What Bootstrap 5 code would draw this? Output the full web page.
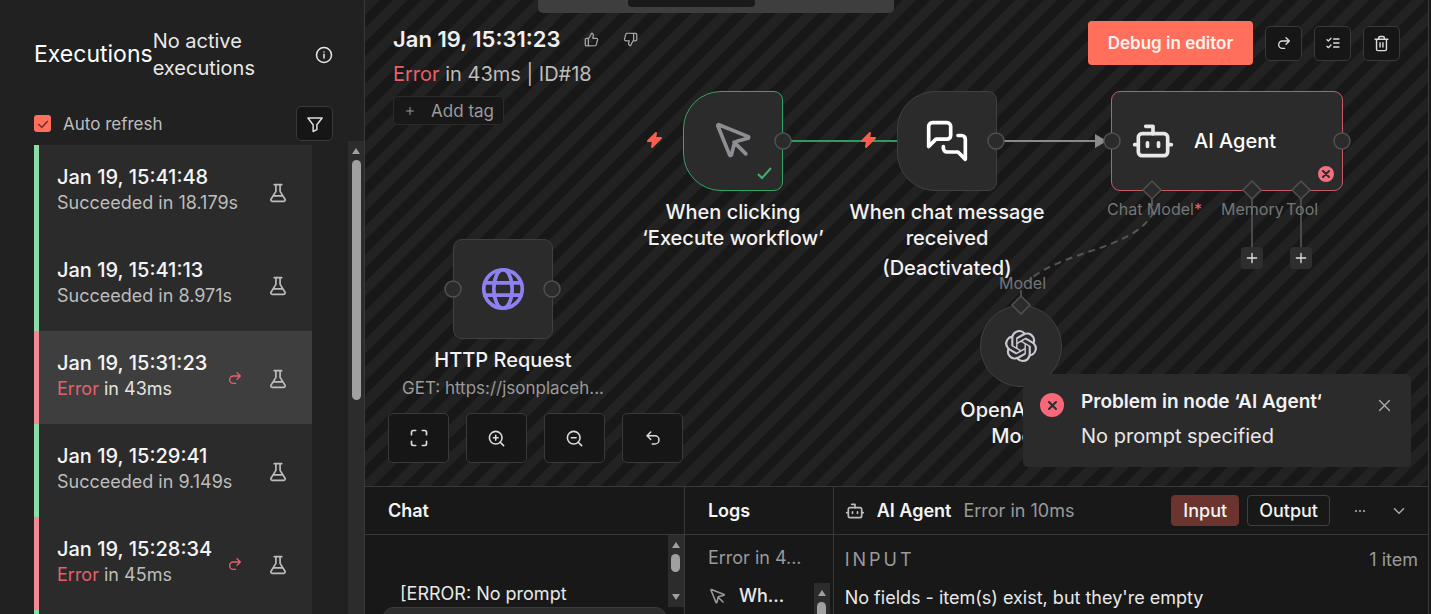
<!DOCTYPE html>
<html lang="en" data-bs-theme="dark">
<head>
<meta charset="utf-8">
<meta name="viewport" content="width=device-width, initial-scale=1">
<title>Executions</title>
<link href="https://cdn.jsdelivr.net/npm/bootstrap@5.3.0/dist/css/bootstrap.min.css" rel="stylesheet">
<style>
  :root { --panel:#212121; --node:#2b2b2b; --ink:#181818; --line:#393939; --accent:#ff6f5c; --ok:#8ddba8; --err:#f28a93; }
  body { font-family: Inter, "Liberation Sans", sans-serif; font-size: 18px; line-height: 26px; background: var(--ink); color: #e8e8e8; }
  svg { display: block; flex: none; }
  .ico { fill: none; stroke: currentColor; stroke-width: 2; stroke-linecap: round; stroke-linejoin: round; }
  .dim { color: #bdbdbd; }
  .faint { color: #9a9a9a; }
  .err-text { color: #e5606d; }
  .t17 { font-size: 17px; } .t18 { font-size: 18px; } .t20 { font-size: 20px; } .t23 { font-size: 23px; }

  .side { width: 365px; background: var(--panel); border-right: 1px solid var(--line); }
  .side-head { padding: 28px 31px 0 34px; }
  .side-tools { padding: 24px 31px 0 34px; }
  .side-list { padding-left: 34px; }
  .active-note { line-height: 27px; width: 120px; }
  .form-check-input.auto { width: 17px; height: 17px; margin: 0; border: 0; border-radius: 3px; background-color: var(--accent); background-size: 14px; background-image: url("data:image/svg+xml,%3Csvg xmlns='http://www.w3.org/2000/svg' viewBox='0 0 24 24'%3E%3Cpath d='M4 12l6 6L20 7' fill='none' stroke='%23702c24' stroke-width='2.5'/%3E%3C/svg%3E"); }
  .sq { width: 37px; height: 35px; padding: 0; border: 1px solid var(--line); border-radius: 5px; background: #161616; color: #dcdcdc; display: flex; align-items: center; justify-content: center; }
  .run { height: 93px; width: 278px; padding: 19px 24px 0 18px; background: var(--node); border-left: 5px solid var(--ok); color: #bdbdbd; text-decoration: none; white-space: nowrap; }
  .run.failed { border-left-color: var(--err); }
  .run.current { background: #3e3e3e; color: #e4e4e4; }
  .run strong { color: #f4f4f4; font-weight: 500; }
  .run-icons { padding-top: 18px; gap: 25px; }
  .bar { width: 16px; background: #2c2c2c; padding: 7px 0; }
  .tri { border: 4px solid transparent; border-top: 0; border-bottom: 6px solid #a0a0a0; width: 8px; height: 6px; flex: none; }
  .tri.down { transform: rotate(180deg); }
  .thumb { width: 9px; border-radius: 5px; background: #a0a0a0; margin-top: 6px; flex: none; }

  .stage { border-right: 1px solid var(--line); margin-right: 2px; }
  .board { background: repeating-linear-gradient(135deg, #222 0 10px, #181818 10px 20px); }
  .mode-tabs { background: #3e3e3e; height: 13px; width: 356px; border-radius: 0 0 5px 5px; z-index: 6; padding-left: 90px; }
  .mode-tabs span { background: #1a1a1a; height: 7px; width: 127px; border-radius: 0 0 4px 4px; }
  .board-head { padding: 21px 28px 0 28px; z-index: 4; }
  .run-title { font-size: 22px; font-weight: 600; line-height: 36px; color: #f0f0f0; margin: 0; }
  .run-meta { line-height: 28px; padding-top: 3px; }
  .rate { background: none; border: 0; padding: 0; color: #a8a8a8; }
  .tag-btn { border: 1px solid #2b2b2b; background: #181818; border-radius: 5px; height: 29px; width: 111px; padding: 0 9px 0 10px; font-size: 17px; color: #9a9a9a; margin-top: 8px; }
  .debug { background: var(--accent); color: #fff3ee; border: 0; border-radius: 4px; width: 165px; height: 44px; font-weight: 600; font-size: 17px; padding: 0; }
  .board-foot { padding: 0 0 23px 23px; z-index: 4; gap: 17px; }
  .zoom-btn { width: 61px; height: 50px; }

  .node { position: absolute; background: var(--node); border: 1px solid #404040; border-radius: 9px; width: 100px; height: 100px; display: flex; align-items: center; justify-content: center; }
  .node.trigger { border-radius: 38px 9px 9px 38px; }
  .node.done { border-color: #35a468; }
  .node.broken { border-color: #c45a66; width: 232px; padding-left: 19px; justify-content: flex-start; gap: 19px; }
  .node-name { position: absolute; top: 107px; left: 50%; transform: translateX(-50%); width: 204px; text-align: center; font-size: 20px; font-weight: 500; line-height: 26px; color: #f2f2f2; }
  .node-sub { line-height: 30px; white-space: nowrap; }
  .port { position: absolute; font-size: 16px; line-height: 20px; color: #757575; white-space: nowrap; }
  .add { position: absolute; width: 22px; height: 22px; padding: 0; border: 0; border-radius: 4px; background: #2e2e2e; color: #e0e0e0; display: flex; align-items: center; justify-content: center; }
  .toast-box { right: 17px; bottom: 19px; width: 388px; height: 93px; background: #2b2b2b; border-radius: 5px; padding: 15px 18px 0 17px; z-index: 7; }
  .toast-title { font-size: 19px; font-weight: 600; color: #f2f2f2; }

  .dock { height: 128px; border-top: 1px solid var(--line); }
  .dock > section + section { border-left: 1px solid var(--line); }
  .dock-chat { width: 30%; } .dock-logs { width: 14%; }
  .dock-head { height: 48px; border-bottom: 1px solid var(--line); flex: none; padding: 0 23px; }
  .dock h2 { font-size: 18px; font-weight: 600; margin: 0; line-height: 26px; color: #f4f4f4; }
  .dock-detail .dock-head { padding: 0 20px 0 11px; }
  .chat-line { padding: 46px 0 0 35px; }
  .chat-box { height: 60px; margin: 0 18px; width: auto; border: 1px solid #3a3a3a; border-radius: 10px; background: #2d2d2d; resize: none; flex: none; }
  .log-status { padding: 10px 23px 0; }
  .log-row { padding: 12px 3px 0 23px; }
  .pill { height: 31px; border-radius: 4px; border: 1px solid #404040; background: #181818; color: #f2f2f2; font-size: 18px; font-weight: 500; padding: 0 11px; line-height: 26px; }
  .pill.on { background: #6b342e; border-color: #6b342e; }
  .caps { letter-spacing: 3px; }
  .detail-body { padding: 12px 10px 0 11px; }
</style>
</head>
<body class="vh-100 overflow-hidden">
<svg width="0" height="0" class="position-absolute" aria-hidden="true">
  <symbol id="i-info" viewBox="0 0 24 24"><circle cx="12" cy="12" r="10"/><path d="M12 16v-5M12 8h.01"/></symbol>
  <symbol id="i-filter" viewBox="0 0 24 24"><path d="M2.500 4h19l-7 9v6.500l-5 2.500v-9z"/></symbol>
  <symbol id="i-flask" viewBox="0 0 24 24"><path d="M7.500 2h9M9.500 2v8L3.600 19.500A1.700 1.700 0 0 0 5 22h14a1.700 1.700 0 0 0 1.400-2.500L14.500 10V2M6.500 15.500h11"/></symbol>
  <symbol id="i-redo" viewBox="0 0 24 24"><path d="m15 14 5-5-5-5M20 9H9.500a5.500 5.500 0 0 0 0 11H13"/></symbol>
  <symbol id="i-undo" viewBox="0 0 24 24"><path d="M9 14 4 9l5-5M4 9h10.500a5.500 5.500 0 0 1 0 11H11"/></symbol>
  <symbol id="i-up" viewBox="0 0 24 24"><path d="M7 10v12M15 5.900 14 10h5.800a2 2 0 0 1 1.900 2.600l-2.300 8a2 2 0 0 1-1.900 1.400H4a2 2 0 0 1-2-2v-8a2 2 0 0 1 2-2h2.800a2 2 0 0 0 1.800-1.100L12 2a3.100 3.100 0 0 1 3 3.900Z"/></symbol>
  <symbol id="i-down" viewBox="0 0 24 24"><path d="M17 14V2M9 18.100 10 14H4.200a2 2 0 0 1-1.900-2.600l2.300-8A2 2 0 0 1 6.500 2H20a2 2 0 0 1 2 2v8a2 2 0 0 1-2 2h-2.800a2 2 0 0 0-1.800 1.100L12 22a3.100 3.100 0 0 1-3-3.900Z"/></symbol>
  <symbol id="i-plus" viewBox="0 0 24 24"><path d="M5 12h14M12 5v14"/></symbol>
  <symbol id="i-checks" viewBox="0 0 24 24"><path d="m3 17 2 2 4-4M3 7l2 2 4-4M13 6h8M13 12h8M13 18h8"/></symbol>
  <symbol id="i-trash" viewBox="0 0 24 24"><path d="M3 6h18M19 6v14a2 2 0 0 1-2 2H7a2 2 0 0 1-2-2V6M8 6V4a2 2 0 0 1 2-2h4a2 2 0 0 1 2 2v2M10 11v6M14 11v6"/></symbol>
  <symbol id="i-fit" viewBox="0 0 24 24"><path d="M8 3H5a2 2 0 0 0-2 2v3M21 8V5a2 2 0 0 0-2-2h-3M3 16v3a2 2 0 0 0 2 2h3M16 21h3a2 2 0 0 0 2-2v-3"/></symbol>
  <symbol id="i-zin" viewBox="0 0 24 24"><circle cx="11" cy="11" r="8"/><path d="m21 21-4.300-4.300M11 8v6M8 11h6"/></symbol>
  <symbol id="i-zout" viewBox="0 0 24 24"><circle cx="11" cy="11" r="8"/><path d="m21 21-4.300-4.300M8 11h6"/></symbol>
  <symbol id="i-cursor" viewBox="0 0 24 24"><path d="M12.600 12.600 19 19M3.700 3.700a.5.5 0 0 1 .6-.6l16 6.500a.5.5 0 0 1-.1.900l-6.100 1.600a2 2 0 0 0-1.400 1.400l-1.600 6.100a.5.5 0 0 1-.9.100z"/></symbol>
  <symbol id="i-chats" viewBox="0 0 24 24"><path d="M14 9a2 2 0 0 1-2 2H6l-4 4V4a2 2 0 0 1 2-2h8a2 2 0 0 1 2 2zM18 9h2a2 2 0 0 1 2 2v11l-4-4h-6a2 2 0 0 1-2-2v-1"/></symbol>
  <symbol id="i-bot" viewBox="0 0 24 24"><path d="M12 8V4H8"/><rect x="4" y="8" width="16" height="12" rx="2"/><path d="M2 14h2M20 14h2M15 13v2M9 13v2"/></symbol>
  <symbol id="i-globe" viewBox="0 0 24 24"><circle cx="12" cy="12" r="10.500"/><ellipse cx="12" cy="12" rx="5" ry="10.500"/><path d="M2 8.700h20M2 15.300h20"/></symbol>
  <symbol id="i-x" viewBox="0 0 24 24"><path d="M5 5l14 14M19 5 5 19"/></symbol>
  <symbol id="i-chev" viewBox="0 0 24 24"><path d="m6 9 6 6 6-6"/></symbol>
  <symbol id="i-dots" viewBox="0 0 24 24"><g fill="currentColor" stroke="none"><circle cx="4" cy="12" r="2.200"/><circle cx="12" cy="12" r="2.200"/><circle cx="20" cy="12" r="2.200"/></g></symbol>
  <symbol id="i-openai" viewBox="0 0 24 24"><path d="M22.2819 9.8211a5.9847 5.9847 0 0 0-.5157-4.9108 6.0462 6.0462 0 0 0-6.5098-2.9A6.0651 6.0651 0 0 0 4.9807 4.1818a5.9847 5.9847 0 0 0-3.9977 2.9 6.0462 6.0462 0 0 0 .7427 7.0966 5.98 5.98 0 0 0 .511 4.9107 6.051 6.051 0 0 0 6.5146 2.9001A5.9847 5.9847 0 0 0 13.2599 24a6.0557 6.0557 0 0 0 5.7718-4.2058 5.9894 5.9894 0 0 0 3.9977-2.9001 6.0557 6.0557 0 0 0-.7475-7.0729zm-9.022 12.6081a4.4755 4.4755 0 0 1-2.8764-1.0408l.1419-.0804 4.7783-2.7582a.7948.7948 0 0 0 .3927-.6813v-6.7369l2.02 1.1686a.071.071 0 0 1 .038.052v5.5826a4.504 4.504 0 0 1-4.4945 4.4944zm-9.6607-4.1254a4.4708 4.4708 0 0 1-.5346-3.0137l.142.0852 4.783 2.7582a.7712.7712 0 0 0 .7806 0l5.8428-3.3685v2.3324a.0804.0804 0 0 1-.0332.0615L9.74 19.9502a4.4992 4.4992 0 0 1-6.1408-1.6464zM2.3408 7.8956a4.485 4.485 0 0 1 2.3655-1.9728V11.6a.7664.7664 0 0 0 .3879.6765l5.8144 3.3543-2.0201 1.1685a.0757.0757 0 0 1-.071 0l-4.8303-2.7865A4.504 4.504 0 0 1 2.3408 7.872zm16.5963 3.8558L13.1038 8.364 15.1192 7.2a.0757.0757 0 0 1 .071 0l4.8303 2.7913a4.4944 4.4944 0 0 1-.6765 8.1042v-5.6772a.79.79 0 0 0-.407-.667zm2.0107-3.0231l-.142-.0852-4.7735-2.7818a.7759.7759 0 0 0-.7854 0L9.409 9.2297V6.8974a.0662.0662 0 0 1 .0284-.0615l4.8303-2.7866a4.4992 4.4992 0 0 1 6.6802 4.66zM8.3065 12.863l-2.02-1.1638a.0804.0804 0 0 1-.038-.0567V6.0742a4.4992 4.4992 0 0 1 7.3757-3.4537l-.142.0805L8.704 5.459a.7948.7948 0 0 0-.3927.6813zm1.0976-2.3654l2.602-1.4998 2.6069 1.4998v2.9994l-2.5974 1.4997-2.6067-1.4997Z"/></symbol>
</svg>

<div class="d-flex h-100 position-relative">
  <div class="mode-tabs position-absolute top-0 start-50 translate-middle-x d-flex"><span></span></div>

  <aside class="side d-flex flex-column flex-shrink-0">
    <div class="side-head d-flex align-items-center">
      <h1 class="t23 fw-normal m-0">Executions</h1>
      <div class="active-note t20">No active executions</div>
      <svg class="ico ms-auto" width="18" height="18"><use href="#i-info"/></svg>
    </div>
    <div class="side-tools d-flex align-items-center justify-content-between">
      <div class="form-check d-flex align-items-center p-0 m-0">
        <input class="form-check-input auto float-none" type="checkbox" id="auto" checked>
        <label class="t17 dim ms-2 ps-1" for="auto">Auto refresh</label>
      </div>
      <button class="sq" type="button" aria-label="Filter"><svg class="ico" width="18" height="18"><use href="#i-filter"/></svg></button>
    </div>
    <div class="side-list d-flex flex-grow-1 justify-content-between overflow-hidden">
      <nav class="d-flex flex-column pt-1" aria-label="Executions">
        <a class="run d-flex justify-content-between flex-shrink-0" href="#"><span><strong class="t20 d-block">Jan 19, 15:41:48</strong><span class="d-block t18">Succeeded in 18.179s</span></span><span class="run-icons d-flex"><svg class="ico" width="20" height="22"><use href="#i-flask"/></svg></span></a>
        <a class="run d-flex justify-content-between flex-shrink-0" href="#"><span><strong class="t20 d-block">Jan 19, 15:41:13</strong><span class="d-block t18">Succeeded in 8.971s</span></span><span class="run-icons d-flex"><svg class="ico" width="20" height="22"><use href="#i-flask"/></svg></span></a>
        <a class="run failed current d-flex justify-content-between flex-shrink-0" href="#"><span><strong class="t20 d-block">Jan 19, 15:31:23</strong><span class="d-block t18"><span class="err-text">Error</span> in 43ms</span></span><span class="run-icons d-flex"><svg class="ico err-text" width="16" height="20"><use href="#i-redo"/></svg><svg class="ico dim" width="20" height="22"><use href="#i-flask"/></svg></span></a>
        <a class="run d-flex justify-content-between flex-shrink-0" href="#"><span><strong class="t20 d-block">Jan 19, 15:29:41</strong><span class="d-block t18">Succeeded in 9.149s</span></span><span class="run-icons d-flex"><svg class="ico" width="20" height="22"><use href="#i-flask"/></svg></span></a>
        <a class="run failed d-flex justify-content-between flex-shrink-0" href="#"><span><strong class="t20 d-block">Jan 19, 15:28:34</strong><span class="d-block t18"><span class="err-text">Error</span> in 45ms</span></span><span class="run-icons d-flex"><svg class="ico err-text" width="16" height="20"><use href="#i-redo"/></svg><svg class="ico" width="20" height="22"><use href="#i-flask"/></svg></span></a>
        <a class="run flex-shrink-0" href="#" aria-label="Older execution"></a>
      </nav>
      <div class="bar d-flex flex-column align-items-center" aria-hidden="true"><i class="tri"></i><i class="thumb" style="height:240px"></i></div>
    </div>
  </aside>

  <main class="stage d-flex flex-column flex-grow-1 overflow-hidden">
    <div class="board position-relative flex-grow-1 overflow-hidden">
      <!-- connections, drawn in board coordinates -->
      <svg class="position-absolute top-0 start-0" width="1063" height="486" fill="none" aria-hidden="true">
        <path d="M418 141H532" stroke="#2f9a5e" stroke-width="2"/>
        <path d="M632 141H734" stroke="#8a8a8a" stroke-width="2"/>
        <path d="M730 134l12 7-12 7z" fill="#8a8a8a"/>
        <path d="M787 199V215C765 250 700 250 664 280" stroke="#555" stroke-width="2" stroke-dasharray="7 5"/>
        <path d="M887 199v50M936 199v50M656 290v8" stroke="#4a4a4a" stroke-width="2"/>
      </svg>

      <div class="node trigger done" style="left:318px;top:91px">
        <svg class="ico" width="44" height="44" style="color:#8f8d93"><use href="#i-cursor"/></svg>
        <div class="node-name">When clicking ‘Execute workflow’</div>
      </div>
      <div class="node trigger" style="left:532px;top:91px">
        <svg class="ico text-white" width="44" height="44"><use href="#i-chats"/></svg>
        <div class="node-name">When chat message received<div class="mt-1">(Deactivated)</div></div>
      </div>
      <div class="node broken" style="left:746px;top:91px">
        <svg class="ico" width="44" height="44"><use href="#i-bot"/></svg>
        <span class="t20 text-white" style="font-weight:500">AI Agent</span>
      </div>
      <div class="node" style="left:88px;top:239px">
        <svg class="ico" width="44" height="44" style="color:#8d80f0"><use href="#i-globe"/></svg>
        <div class="node-name">HTTP Request<div class="node-sub t17 faint fw-normal">GET: https://jsonplaceh...</div></div>
      </div>
      <div class="node rounded-circle" style="left:615px;top:305px;width:82px;height:82px">
        <svg width="32" height="32" fill="#c9c9d4"><use href="#i-openai"/></svg>
        <div class="node-name" style="top:91px">OpenAI Chat<br>Model</div>
      </div>

      <!-- connection handles, trigger bolts and status marks -->
      <svg class="position-absolute top-0 start-0" width="1063" height="486" fill="none" aria-hidden="true">
        <g fill="#2b2b2b" stroke="#505050" stroke-width="1.500">
          <circle cx="418" cy="141" r="8"/><circle cx="631" cy="141" r="8"/><circle cx="747" cy="141" r="8"/><circle cx="977" cy="141" r="8"/>
          <circle cx="88" cy="289" r="8"/><circle cx="187" cy="289" r="8"/>
          <path d="M787 181l9 9-9 9-9-9zM887 181l9 9-9 9-9-9zM936 181l9 9-9 9-9-9zM656 296l9 9-9 9-9-9z"/>
        </g>
        <g fill="#ff5d4c" stroke="#ff5d4c" stroke-linejoin="round" stroke-width="2"><path id="bolt" d="M291 133l-8 8h5l-1 6 9-9h-6z"/><use href="#bolt" x="214"/></g>
        <path d="M393 174l4 4 9-10" stroke="#3fae70" stroke-width="2"/>
        <circle cx="961" cy="174" r="8" fill="#f0707f"/><path d="M958 171l6 6M964 171l-6 6" stroke="#2b2b2b" stroke-width="2" stroke-linecap="round"/>
      </svg>
      <span class="port" style="left:742px;top:199px">Chat Model<span class="err-text">*</span></span>
      <span class="port" style="left:856px;top:199px">Memory</span>
      <span class="port" style="left:921px;top:199px">Tool</span>
      <span class="port" style="left:634px;top:273px">Model</span>
      <button class="add" type="button" aria-label="Add memory" style="left:876px;top:247px"><svg class="ico" width="16" height="16"><use href="#i-plus"/></svg></button>
      <button class="add" type="button" aria-label="Add tool" style="left:925px;top:247px"><svg class="ico" width="16" height="16"><use href="#i-plus"/></svg></button>

      <header class="board-head position-absolute top-0 start-0 w-100 d-flex justify-content-between align-items-start">
        <div>
          <div class="d-flex align-items-center">
            <h2 class="run-title">Jan 19, 15:31:23</h2>
            <button class="rate ms-4" type="button" aria-label="Good run"><svg class="ico" width="15" height="15"><use href="#i-up"/></svg></button>
            <button class="rate ms-4" type="button" aria-label="Bad run"><svg class="ico" width="15" height="15"><use href="#i-down"/></svg></button>
          </div>
          <div class="run-meta t20 dim"><span class="err-text">Error</span> in 43ms | ID#18</div>
          <button class="tag-btn d-flex align-items-center justify-content-between" type="button"><svg class="ico" width="12" height="12"><use href="#i-plus"/></svg>Add tag</button>
        </div>
        <div class="d-flex align-items-center gap-2">
          <button class="debug me-1" type="button">Debug in editor</button>
          <button class="sq me-1" type="button" aria-label="Retry"><svg class="ico" width="16" height="16"><use href="#i-redo"/></svg></button>
          <button class="sq me-1" type="button" aria-label="Annotate"><svg class="ico" width="16" height="16"><use href="#i-checks"/></svg></button>
          <button class="sq" type="button" aria-label="Delete"><svg class="ico" width="17" height="17"><use href="#i-trash"/></svg></button>
        </div>
      </header>

      <div class="board-foot position-absolute bottom-0 start-0 d-flex">
        <button class="sq zoom-btn" type="button" aria-label="Fit view"><svg class="ico" width="20" height="20"><use href="#i-fit"/></svg></button>
        <button class="sq zoom-btn" type="button" aria-label="Zoom in"><svg class="ico" width="19" height="19"><use href="#i-zin"/></svg></button>
        <button class="sq zoom-btn" type="button" aria-label="Zoom out"><svg class="ico" width="19" height="19"><use href="#i-zout"/></svg></button>
        <button class="sq zoom-btn" type="button" aria-label="Reset zoom"><svg class="ico" width="18" height="18"><use href="#i-undo"/></svg></button>
      </div>

      <div class="toast-box position-absolute d-flex align-items-start" role="alert">
        <svg class="mt-1" width="25" height="25" viewBox="0 0 25 25"><circle cx="12" cy="12" r="12" fill="#f9687a"/><path d="M9 9l7 7M16 9l-7 7" stroke="#2b2b2b" stroke-width="2" stroke-linecap="round"/></svg>
        <div class="ms-3 flex-grow-1">
          <div class="toast-title">Problem in node ‘AI Agent‘</div>
          <div class="t20 mt-2">No prompt specified</div>
        </div>
        <button class="rate mt-1 pt-1" type="button" aria-label="Close"><svg class="ico" width="17" height="17"><use href="#i-x"/></svg></button>
      </div>
    </div>

    <div class="dock d-flex flex-shrink-0">
      <section class="dock-chat d-flex flex-column overflow-hidden">
        <div class="dock-head d-flex align-items-center"><h2>Chat</h2></div>
        <div class="d-flex justify-content-between flex-shrink-0">
          <div class="chat-line t18">[ERROR: No prompt</div>
          <div class="bar d-flex flex-column align-items-center" aria-hidden="true"><i class="tri"></i><i class="thumb" style="height:18px"></i><i class="tri down mt-auto"></i></div>
        </div>
        <textarea class="form-control chat-box" aria-label="Message"></textarea>
      </section>
      <section class="dock-logs d-flex flex-column overflow-hidden">
        <div class="dock-head d-flex align-items-center"><h2>Logs</h2></div>
        <div class="log-status t18 faint">Error in 4...</div>
        <div class="log-row d-flex justify-content-between align-items-start">
          <div class="d-flex align-items-center gap-2"><svg class="ico faint" width="19" height="19"><use href="#i-cursor"/></svg><span class="t18 ms-1" style="font-weight:500">Wh...</span></div>
          <div class="bar d-flex flex-column align-items-center" aria-hidden="true"><i class="tri"></i><i class="thumb" style="height:40px"></i></div>
        </div>
      </section>
      <section class="dock-detail flex-grow-1 overflow-hidden">
        <div class="dock-head d-flex align-items-center">
          <svg class="ico dim" width="20" height="20"><use href="#i-bot"/></svg>
          <h2 class="ms-2 ps-1">AI Agent</h2><span class="t18 faint ms-2 ps-1">Error in 10ms</span>
          <button class="pill on ms-auto" type="button">Input</button>
          <button class="pill ms-2" type="button">Output</button>
          <button class="rate ms-4" type="button" aria-label="More"><svg class="ico" width="12" height="12"><use href="#i-dots"/></svg></button>
          <button class="rate ms-4" type="button" aria-label="Collapse"><svg class="ico" width="18" height="18"><use href="#i-chev"/></svg></button>
        </div>
        <div class="detail-body">
          <div class="d-flex justify-content-between faint t18"><span class="caps">INPUT</span><span>1 item</span></div>
          <div class="t18 mt-2 pt-1">No fields - item(s) exist, but they're empty</div>
        </div>
      </section>
    </div>
  </main>
</div>
<script src="https://cdn.jsdelivr.net/npm/bootstrap@5.3.0/dist/js/bootstrap.bundle.min.js"></script>
</body>
</html>
